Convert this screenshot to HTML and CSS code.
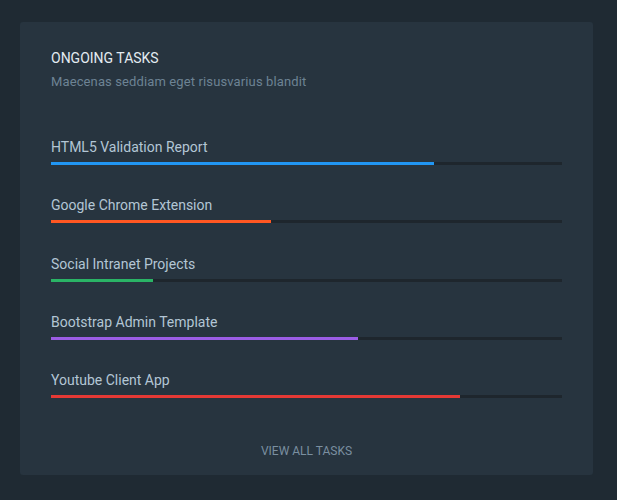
FILE: index.html
```html
<!DOCTYPE html>
<html lang="en">
<head>
<meta charset="utf-8">
<title>Ongoing Tasks</title>
<link rel="stylesheet" href="styles.css">
</head>
<body>
<section class="card">
  <header class="card-header">
    <h2 class="card-title">ONGOING TASKS</h2>
    <p class="card-subtitle">Maecenas seddiam eget risusvarius blandit</p>
  </header>
  <ul class="tasks">
    <li class="task">
      <span class="task-name">HTML5 Validation Report</span>
      <div class="track"><div class="fill fill-blue" style="width:75%"></div></div>
    </li>
    <li class="task">
      <span class="task-name">Google Chrome Extension</span>
      <div class="track"><div class="fill fill-orange" style="width:43%"></div></div>
    </li>
    <li class="task">
      <span class="task-name">Social Intranet Projects</span>
      <div class="track"><div class="fill fill-green" style="width:20%"></div></div>
    </li>
    <li class="task">
      <span class="task-name">Bootstrap Admin Template</span>
      <div class="track"><div class="fill fill-purple" style="width:60%"></div></div>
    </li>
    <li class="task">
      <span class="task-name">Youtube Client App</span>
      <div class="track"><div class="fill fill-red" style="width:80%"></div></div>
    </li>
  </ul>
  <footer class="card-footer">
    <a class="view-all" href="#">VIEW ALL TASKS</a>
  </footer>
</section>
</body>
</html>
```
FILE: styles.css
```css
html, body {
  margin: 0;
  padding: 0;
}
body {
  background: #1f2a33;
  font-family: Roboto, "Liberation Sans", sans-serif;
  padding: 22px 24px 0 20px;
}
.card {
  width: 573px;
  height: 453px;
  box-sizing: border-box;
  background: #27343f;
  border-radius: 3px;
  padding: 26px 31px 0;
}
.card-header {
  margin: 0;
}
.card-title {
  margin: 0;
  font-size: 14px;
  font-weight: 400;
  line-height: 20px;
  color: #e3ebf1;
}
.card-subtitle {
  margin: 4px 0 0;
  font-size: 13px;
  letter-spacing: 0.12px;
  line-height: 20px;
  color: #6d8394;
}
.tasks {
  list-style: none;
  margin: 45px 0 0;
  padding: 0;
  display: flex;
  flex-direction: column;
  gap: 30.3px;
}
.task {
  display: flex;
  flex-direction: column;
  gap: 5px;
}
.task-name {
  font-size: 14px;
  line-height: 20px;
  color: #b3c6d5;
}
.track {
  height: 3px;
  background: #1e262d;
}
.fill {
  height: 100%;
}
.fill-blue { background: #2196f3; }
.fill-orange { background: #ff5722; }
.fill-green { background: #2ab466; }
.fill-purple { background: #9b5de5; }
.fill-red { background: #e53935; }
.card-footer {
  margin-top: 44px;
  text-align: center;
  line-height: 16px;
}
.view-all {
  font-size: 12px;
  color: #7a8fa0;
  text-decoration: none;
}
```
